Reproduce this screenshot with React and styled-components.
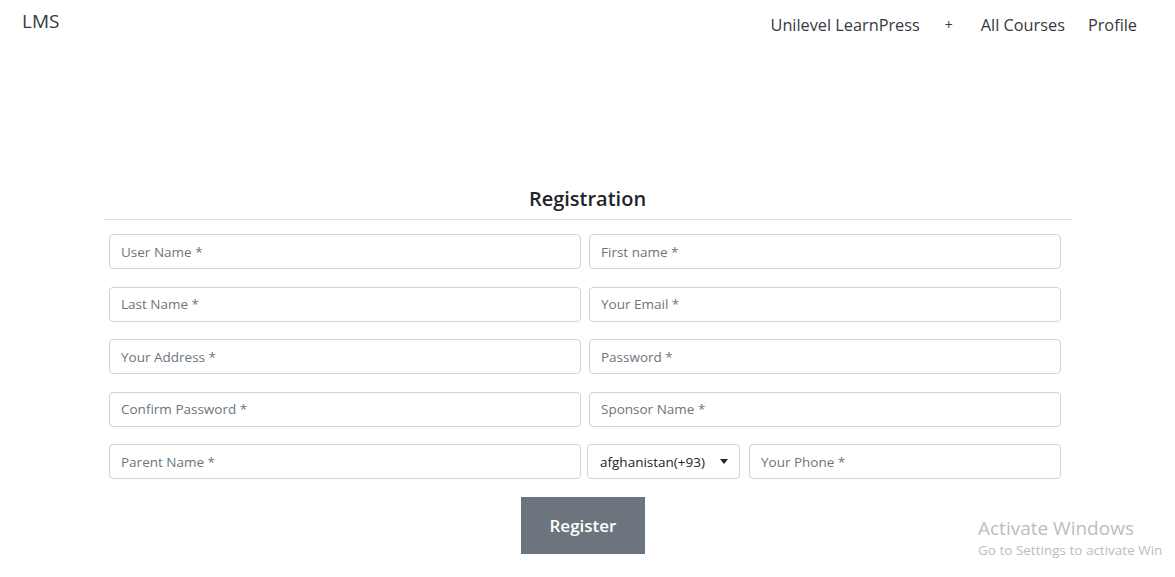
import React from 'react';
import styled, { createGlobalStyle } from 'styled-components';

const FIELDS = [
  ['User Name *', 'First name *'],
  ['Last Name *', 'Your Email *'],
  ['Your Address *', 'Password *'],
  ['Confirm Password *', 'Sponsor Name *'],
];

const GlobalStyle = createGlobalStyle`
  html, body {
    margin: 0;
    padding: 0;
    background: #fff;
    font-family: "Open Sans", "Noto Sans", sans-serif;
    color: #212529;
  }
`;

const App = () => {
  return (
    <Page>
      <GlobalStyle />
      <Header>
        <Brand>LMS</Brand>
        <Nav>
          <NavLink>Unilevel LearnPress</NavLink>
          <NavPlus>+</NavPlus>
          <NavLink>All Courses</NavLink>
          <NavLink>Profile</NavLink>
        </Nav>
      </Header>

      <Card>
        <Title>Registration</Title>
        <Form>
          {FIELDS.map(([left, right]) => (
            <Row key={left}>
              <Input placeholder={left} />
              <Input placeholder={right} />
            </Row>
          ))}
          <Row>
            <Input placeholder='Parent Name *' />
            <PhoneGroup>
              <Select>
                <span>afghanistan(+93)</span>
                <Caret />
              </Select>
              <Input placeholder='Your Phone *' />
            </PhoneGroup>
          </Row>
          <ButtonRow>
            <RegisterButton>Register</RegisterButton>
          </ButtonRow>
        </Form>
      </Card>

      <Watermark>
        <WatermarkTitle>Activate Windows</WatermarkTitle>
        <WatermarkText>Go to Settings to activate Win</WatermarkText>
      </Watermark>
    </Page>
  );
};

const Page = styled.div`
  position: relative;
  width: 1175px;
  height: 577px;
  overflow: hidden;
`;

const Header = styled.div`
  display: flex;
  justify-content: space-between;
  align-items: flex-start;
  padding: 8px 38px 0 22px;
  height: 152px;
  box-sizing: border-box;
`;

const Brand = styled.div`
  font-size: 19px;
  line-height: 26px;
  color: #343a40;
`;

const Nav = styled.div`
  display: flex;
  align-items: center;
  gap: 23px;
  padding-top: 4px;
`;

const NavLink = styled.div`
  font-size: 16.3px;
  line-height: 26px;
  color: #343a40;
`;

const NavPlus = styled.div`
  font-size: 14px;
  line-height: 26px;
  color: #343a40;
  margin: 0 5px 0 2px;
`;

const Card = styled.div`
  width: 969px;
  margin: 32px auto 0;
`;

const Title = styled.div`
  text-align: center;
  font-size: 20px;
  font-weight: 600;
  line-height: 28px;
  padding: 1px 0 6px;
  border-bottom: 1px solid #dee2e6;
  color: #212529;
`;

const Form = styled.div`
  padding: 14px 6px 0 6px;
  display: flex;
  flex-direction: column;
  gap: 17.5px;
`;

const Row = styled.div`
  display: grid;
  grid-template-columns: 472px 472px;
  gap: 8px;
`;

const Input = styled.input`
  height: 35px;
  box-sizing: border-box;
  border: 1px solid #ced4da;
  border-radius: 4px;
  padding: 0 11px;
  font-family: "Open Sans", "Noto Sans", sans-serif;
  font-size: 13.5px;
  color: #495057;
  width: 100%;
  outline: none;

  &::placeholder {
    color: #6c757d;
  }
`;

const PhoneGroup = styled.div`
  display: grid;
  grid-template-columns: 153px 1fr;
  gap: 9px;
  margin-left: -2px;
`;

const Select = styled.div`
  height: 35px;
  box-sizing: border-box;
  border: 1px solid #ced4da;
  border-radius: 4px;
  display: flex;
  align-items: center;
  justify-content: space-between;
  padding: 0 11px 0 12px;
  font-size: 13.5px;
  color: #212529;
`;

const Caret = styled.span`
  width: 0;
  height: 0;
  border-left: 4.5px solid transparent;
  border-right: 4.5px solid transparent;
  border-top: 5px solid #212529;
`;

const ButtonRow = styled.div`
  display: flex;
  justify-content: center;
  padding-right: 9px;
`;

const RegisterButton = styled.button`
  width: 124px;
  height: 57px;
  border: none;
  border-radius: 0;
  background: #6c757d;
  color: #fff;
  font-family: "Open Sans", "Noto Sans", sans-serif;
  font-size: 17px;
  font-weight: 600;
  cursor: pointer;
`;

const Watermark = styled.div`
  position: absolute;
  left: 978px;
  top: 515px;
  white-space: nowrap;
  color: #bdbdbd;
`;

const WatermarkTitle = styled.div`
  font-size: 19px;
  line-height: 26px;
`;

const WatermarkText = styled.div`
  font-size: 13.5px;
  line-height: 18px;
`;

export default App;
